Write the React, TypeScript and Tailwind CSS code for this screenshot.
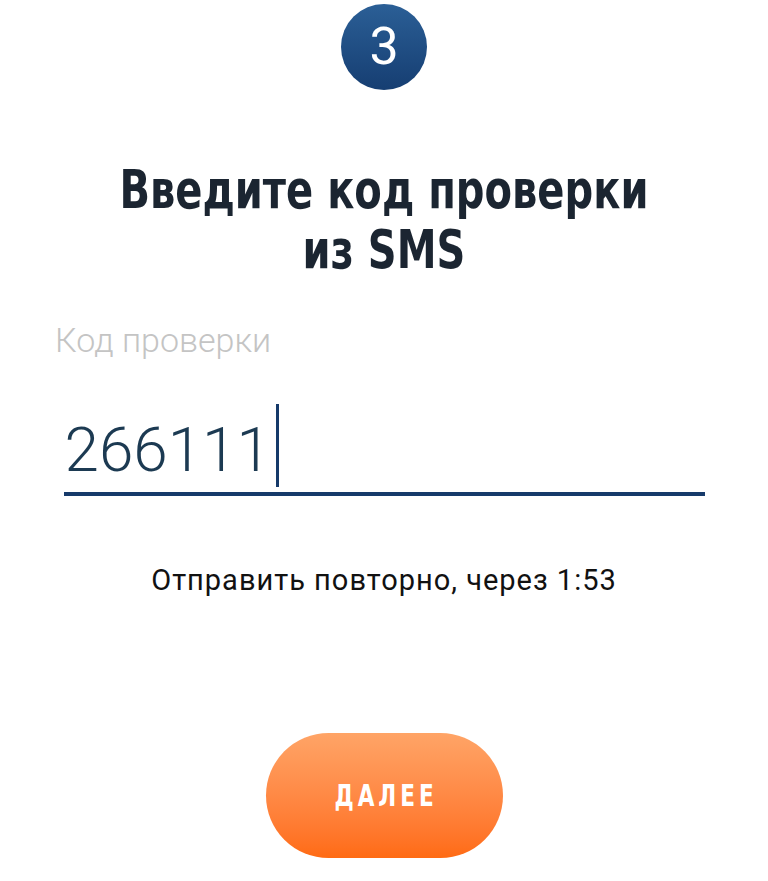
import React from "react";

export default function App() {
  return (
    <div className="w-[768px] h-[881px] bg-white flex flex-col items-center overflow-hidden" style={{ fontFamily: "Roboto, 'Liberation Sans', sans-serif" }}>
      <div className="mt-[4px] w-[86px] h-[86px] rounded-full bg-gradient-to-b from-[#2b5f96] to-[#163e72] flex items-center justify-center">
        <span className="text-white text-[52px] leading-none font-normal">3</span>
      </div>
      <h1
        className="mt-[70px] text-center text-[#1b2531] text-[53px] leading-[60px] font-bold scale-x-[0.84] whitespace-nowrap"
        style={{ fontFamily: "'DejaVu Sans Condensed', 'Roboto Condensed', Roboto, sans-serif" }}
      >
        Введите код проверки
        <br />
        из SMS
      </h1>
      <div className="w-full px-[55px] mt-[38px]">
        <div className="text-[34px] leading-[44px] font-light text-[#c4c4c4]">Код проверки</div>
      </div>
      <div className="w-[641px] mt-[42px] border-b-[4px] border-[#163a6a] flex items-end pb-[5px]">
        <span className="ml-[1px] mb-[5px] text-[62px] leading-[64px] font-light text-[#1c3a52]">266111</span>
        <span className="ml-[5px] w-[3px] h-[83px] bg-[#163a6a]" />
      </div>
      <div className="mt-[66px] text-[29px] leading-[36px] text-[#111] tracking-[1px]">Отправить повторно, через 1:53</div>
      <button className="mt-[135px] w-[237px] h-[125px] rounded-full bg-gradient-to-b from-[#ffa466] to-[#ff6b12] flex items-center justify-center">
        <span
          className="text-white text-[30px] font-bold tracking-[5px] scale-x-[0.8] pl-[5px]"
          style={{ fontFamily: "'DejaVu Sans Condensed', Roboto, sans-serif" }}
        >
          ДАЛЕЕ
        </span>
      </button>
    </div>
  );
}
